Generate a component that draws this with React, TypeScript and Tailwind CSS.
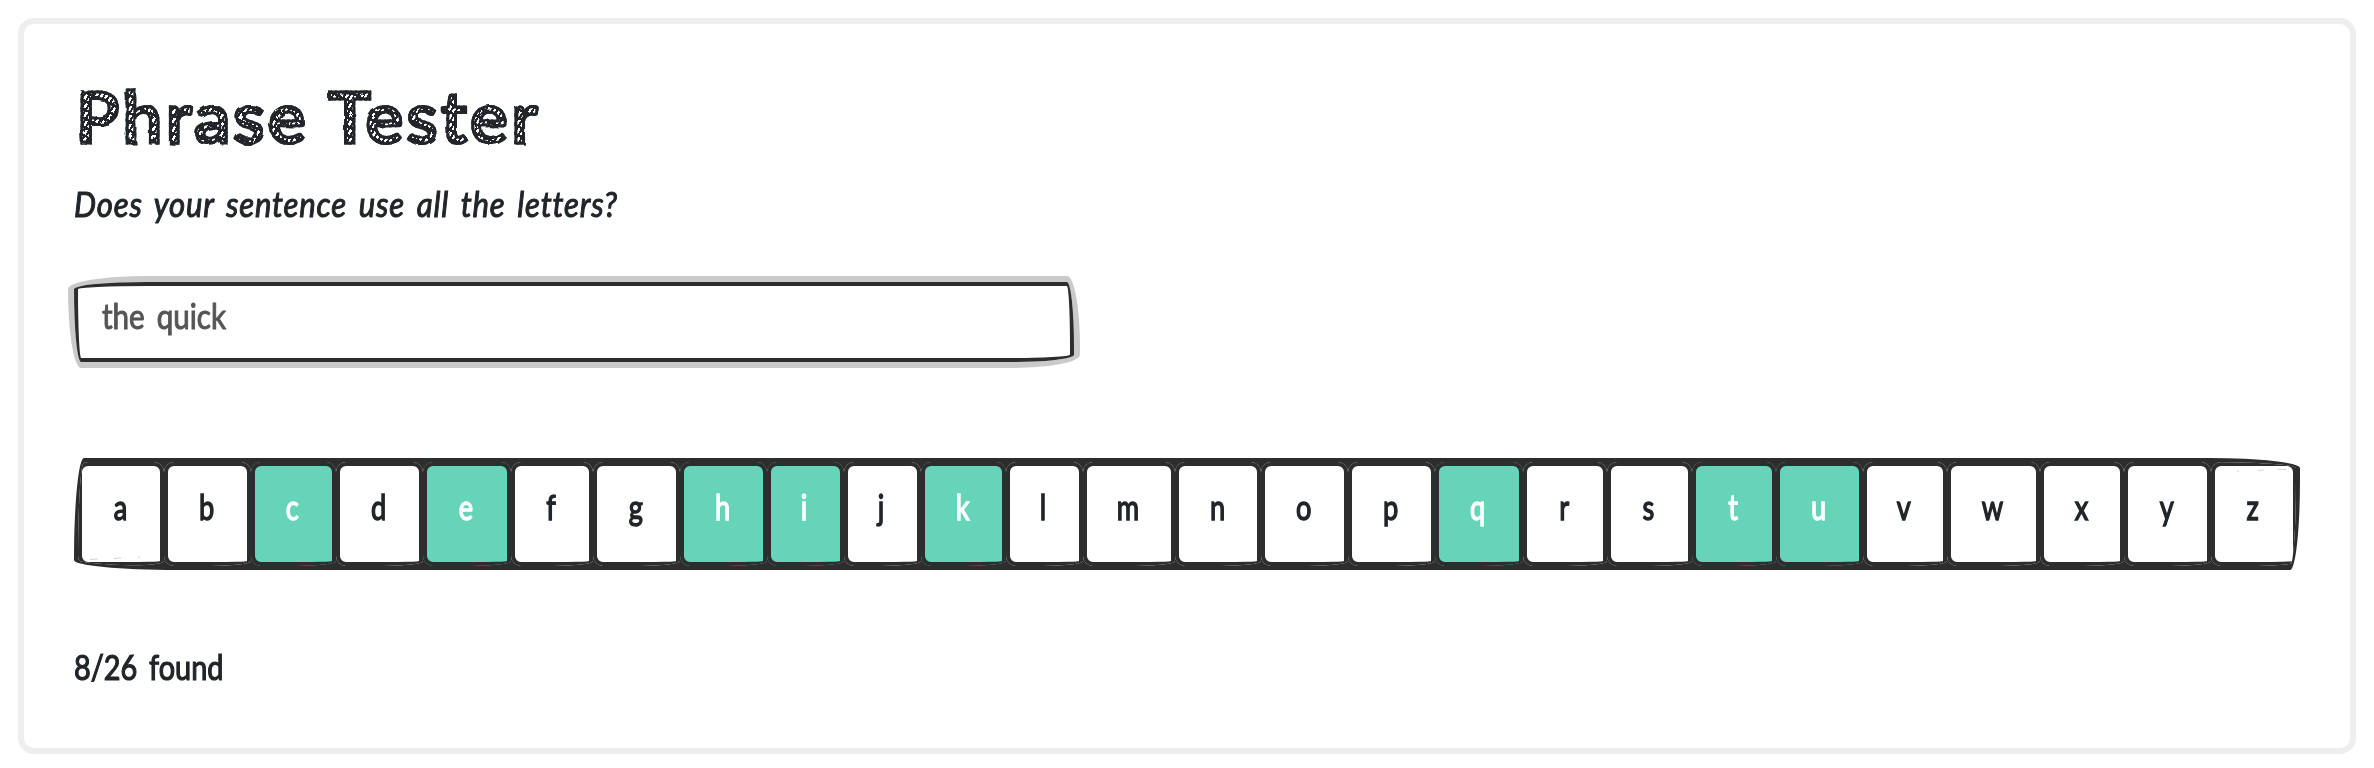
import React from "react";

const phrase = "the quick";
const found = new Set(phrase.replace(/[^a-z]/g, "").split(""));

const cells: [string, number][] = [
  ["a", 86], ["b", 87], ["c", 85], ["d", 87], ["e", 88], ["f", 82], ["g", 87], ["h", 87], ["i", 77],
  ["j", 77], ["k", 85], ["l", 77], ["m", 92], ["n", 86], ["o", 87], ["p", 87], ["q", 88], ["r", 84],
  ["s", 85], ["t", 84], ["u", 87], ["v", 84], ["w", 93], ["x", 84], ["y", 87], ["z", 86],
];

function Cell({ letter, width }: { letter: string; width: number }) {
  const hit = found.has(letter);
  return (
    <div
      style={{ width }}
      className={
        "relative flex shrink-0 rounded-[10px_10px_40px_10px/10px_10px_5px_10px] " +
        (hit ? "bg-[#66d4b8] text-white" : "bg-white")
      }
    >
      <div className="flex w-full items-center justify-center rounded-[10px_10px_40px_10px/10px_10px_5px_10px] border-4 border-[#2d2d2d] pr-[2px] pb-[14px] text-[34px] leading-[50px]">
        <span className="inline-block scale-x-[0.8] [-webkit-text-stroke:1.4px_currentColor]">{letter}</span>
      </div>
      {letter === "a" && (
        <svg className="absolute bottom-[5px] left-[11px]" width="60" height="5" viewBox="0 0 60 5" stroke="#aaa" strokeWidth="0.5">
          <path d="M1 3.5L9 3M25 2.6L32 2M49 1.2L51 1" />
        </svg>
      )}
      {letter === "z" && (
        <svg className="absolute top-[5px] right-[10px]" width="60" height="5" viewBox="0 0 60 5" stroke="#aaa" strokeWidth="0.5">
          <path d="M10 4.3L12 4.1M31 3.5L37 3M50 2L59 2.5" />
        </svg>
      )}
    </div>
  );
}

export default function App() {
  return (
    <div className="h-[768px] w-[2374px] bg-white p-[18px] pb-[14px] font-['Lato',sans-serif] text-[#212529]">
      <svg className="absolute" width="0" height="0">
        <filter id="rough" x="-2%" y="-10%" width="104%" height="120%">
          <feTurbulence type="fractalNoise" baseFrequency="0.06" numOctaves="2" seed="4" />
          <feDisplacementMap in="SourceGraphic" scale="3" />
        </filter>
      </svg>
      <main className="h-full rounded-[16px] border-[6px] border-[#eee] px-[50px] pt-[48px]">
        <h1 className="h-[78px] pl-[2px] text-[71px] leading-[88px] font-semibold whitespace-nowrap">
          <span className="inline-block bg-[repeating-linear-gradient(25deg,#212529_0_2.5px,transparent_2.5px_8px),repeating-linear-gradient(120deg,#212529_0_2px,#fff_2px_4.4px)] bg-clip-text tracking-[3.4px] text-transparent [-webkit-text-stroke:3px_#212529] [filter:url(#rough)]">
            Phrase Tester
          </span>
        </h1>
        <p className="mt-[27px] h-[54px] text-[34px] leading-[54px] whitespace-nowrap italic">
          <span className="inline-block origin-left scale-x-[0.915] tracking-[0.9px] [word-spacing:4px] [-webkit-text-stroke:1px_currentColor]">
            Does your sentence use all the letters?
          </span>
        </p>
        <div className="mt-[51px] flex h-[80px] w-[1000px] items-center rounded-[510px_50px_450px_50px/50px_450px_50px_510px] border-4 border-[#2d2d2d] px-6 pb-[14px] text-[34px] text-[#555] shadow-[0_0_0_6px_#cacaca]">
          <span className="inline-block origin-left scale-x-[0.87] [word-spacing:5px] [-webkit-text-stroke:1px_currentColor]">{phrase}</span>
        </div>
        <div className="mt-[96px] flex h-[112px] w-[2226px] overflow-hidden rounded-[50px_450px_50px_510px/510px_50px_450px_50px] border-4 border-[#2d2d2d] bg-[#2d2d2d]">
          {cells.map(([letter, width]) => (
            <Cell key={letter} letter={letter} width={width} />
          ))}
        </div>
        <p className="mt-[70px] text-[34px] leading-[54px]">
          <span className="inline-block origin-left scale-x-[0.85] [word-spacing:5px] [-webkit-text-stroke:1.2px_currentColor]">
            {found.size}/26 found
          </span>
        </p>
      </main>
    </div>
  );
}
